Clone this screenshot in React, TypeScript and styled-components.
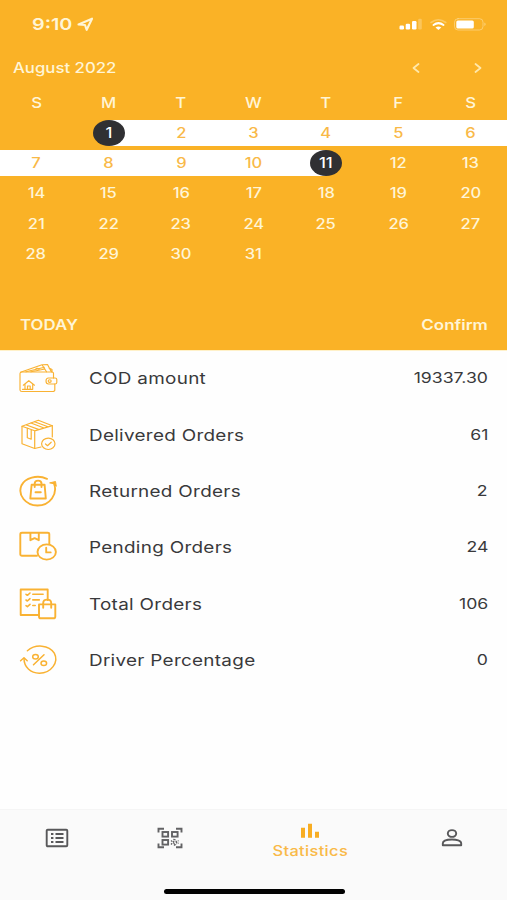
import React from "react";
import styled, { createGlobalStyle } from "styled-components";

const ORANGE = "#fab226";
const CREAM = "#fff5d6";
const INK = "#39393b";
const ICON = "#f9b233";

const GlobalStyle = createGlobalStyle`
  * { box-sizing: border-box; }
  body { margin: 0; background: #fff; font-family: Inter, "Liberation Sans", sans-serif; }
`;

const Screen = styled.div`
  width: 507px;
  height: 900px;
  display: flex;
  flex-direction: column;
  overflow: hidden;
  background: #fefefe;
`;

/* Wide lettering: glyphs are stretched horizontally from the anchored side. */
const Wide = styled.span<{
  $size: number;
  $stretch?: number;
  $weight?: number;
  $color?: string;
  $from?: "left" | "center" | "right";
  $track?: number;
}>`
  display: inline-block;
  white-space: nowrap;
  font-size: ${(p) => p.$size}px;
  line-height: 20px;
  font-weight: ${(p) => p.$weight ?? 400};
  color: ${(p) => p.$color ?? CREAM};
  letter-spacing: ${(p) => p.$track ?? 0}px;
  transform: scaleX(${(p) => p.$stretch ?? 1.22});
  transform-origin: ${(p) => p.$from ?? "center"} center;
`;

const Header = styled.header`
  height: 351px;
  flex: none;
  display: flex;
  flex-direction: column;
  background: ${ORANGE};
  border-bottom: 1px solid #fff1c9;
`;

const StatusBar = styled.div`
  height: 49px;
  padding: 0 20px 1px 32px;
  display: flex;
  align-items: center;
  justify-content: space-between;
`;

const Clock = styled.div`
  display: flex;
  align-items: center;
  gap: 11px;
`;

const MonthBar = styled.div`
  height: 37px;
  padding: 1px 24px 0 13px;
  display: flex;
  align-items: center;
  justify-content: space-between;
`;

const Arrows = styled.div`
  display: flex;
  gap: 52px;
`;

const Week = styled.div<{ $h: number }>`
  height: ${(p) => p.$h}px;
  display: grid;
  grid-template-columns: repeat(7, 1fr);
  align-items: center;
`;

const WeekNames = styled(Week)`
  padding-top: 2px;
`;

const Weeks = styled.div`
  flex: 1;
`;

const Day = styled.div<{ $fill?: "full" | "start" | "end" }>`
  height: 26px;
  display: flex;
  align-items: center;
  justify-content: center;
  background: ${(p) =>
    p.$fill === "full"
      ? "#fff"
      : p.$fill === "start"
      ? "linear-gradient(90deg, transparent 50%, #fff 50%)"
      : p.$fill === "end"
      ? "linear-gradient(90deg, #fff 50%, transparent 50%)"
      : "none"};
`;

const Pill = styled.div`
  width: 32px;
  height: 26px;
  border-radius: 50%;
  background: #303033;
  display: flex;
  align-items: center;
  justify-content: center;
`;

const Actions = styled.div`
  height: 52px;
  padding: 1px 19px 0 20px;
  display: flex;
  align-items: center;
  justify-content: space-between;
`;

const List = styled.main`
  flex: 1;
  display: flex;
  flex-direction: column;
  margin-top: -1px;
`;

const Row = styled.div`
  height: 56.4px;
  padding: 0 19px 0 18px;
  display: flex;
  align-items: center;
`;

const RowLabel = styled.div`
  flex: 1;
  padding-left: 28.5px;
  display: flex;
`;

const Glyph = styled.svg`
  flex: none;
  display: block;
  fill: none;
  stroke-linecap: round;
  stroke-linejoin: round;
`;

const TabBar = styled.nav`
  height: 91px;
  flex: none;
  display: flex;
  flex-direction: column;
  background: #fafafa;
  border-top: 1px solid #f5f5f5;
`;

const Tabs = styled.div`
  height: 55px;
  display: grid;
  grid-template-columns: 113px 113px 168px 115px;
`;

const Tab = styled.div`
  display: flex;
  flex-direction: column;
  align-items: center;
  justify-content: center;
`;

const ActiveTab = styled(Tab)`
  justify-content: flex-start;
  padding-top: 12px;
  gap: 1px;
`;

const HomeBar = styled.div`
  width: 181px;
  height: 5px;
  margin: 23.500px 0 0 164px;
  border-radius: 3px;
  background: #000;
`;

const icons: Record<string, React.ReactNode> = {
  wallet: (
    <g strokeWidth="1.15">
      <path d="M35.5 18V13.2Q35.5 12 34 12H4Q2 12 2 13.5V30Q2 31.5 4 31.5H34.5Q36.8 31.5 36.8 30V24" />
      <path d="M2.5 12.3 24 4.8l4.500 7M8 11.8l18.500-4.500M13 11.8 27 9M24.500 4.800l5-.3 3.800 7.200M34 12V9.500L31 8M18 8.500q2-.6 3 .6" />
      <path d="M37 18h-6.500Q28 18 28 21t2.500 3H37q1.800 0 1.800-1.500v-3Q38.800 18 37 18Z" />
      <ellipse cx="31.700" cy="21" rx="1.500" ry="1.300" />
      <path d="M5.300 25.200 10.800 20.700 16.500 25.200M7 24v5.300h7.700V24M9.500 29v-3h2.700v3M4.500 29.300h2" />
    </g>
  ),
  box: (
    <g strokeWidth="1.200">
      <path d="M23 30 16.700 31.500 4 26.700V9.300L20.300 3.200 34.300 8.700V20" />
      <path d="m4 9.300 12.700 4.500 17.600-5.100M16.700 13.800v17.700M8.500 8l12.600 4.600M13 6l13 5M16.500 4.700 30 9.700M9.300 11.200v9.500l3.900 1.500V12.700" />
      <ellipse cx="30.300" cy="26.800" rx="6.700" ry="5.700" fill="#fefefe" />
      <path d="m27.500 27 2 1.700 3.700-3.500" />
    </g>
  ),
  returned: (
    <g strokeWidth="1.900">
      <path d="M29 5.800C19 1.300 7 5 3.400 12.500-.5 22 7.500 32.300 19.500 32.500 32 32.500 40 21 36 10.500" />
      <path fill={ICON} strokeWidth="1" d="m32 9.800 5.500-1.300.8 4.800-2.300-2.300Z" />
      <path d="M13.600 11.800h13L27.800 25.500H12.300ZM16.700 14V10.500q0-2.900 3.400-2.900t3.400 2.900V14M17.500 19.300h5.300" />
    </g>
  ),
  pending: (
    <g strokeWidth="1.900">
      <path d="M19 26.700H4q-1.700 0-1.700-1.500V5.200q0-1.500 1.700-1.500h25.700q1.600 0 1.600 1.500v10M12.400 4v7.200l4.200-2.100 4.200 2.100V4" />
      <ellipse cx="28.700" cy="23" rx="9.200" ry="7.600" />
      <path d="M28.200 18.700v4.700h4.500" />
    </g>
  ),
  total: (
    <g strokeWidth="1.900">
      <path d="M20.700 29h-18V3.500h27V14" />
      <path d="M21 18.400h16.300v12q0 1.900-2 1.900H23q-2 0-2-1.900ZM25.200 21.700V17q0-3.400 4-3.400t4 3.400v4.700" />
      <g strokeWidth="1.600">
        <path d="m8 8.300 1.400 1L12 7M8 14l1.400 1 2.600-2.300M8 19.700l1.400 1 2.600-2.300M14.800 8.300h10.300M14.800 13.900h6.500M14.800 19.500h2.400" />
      </g>
    </g>
  ),
  percent: (
    <g strokeWidth="1.500">
      <path d="M9.400 8.700C17.500 1.800 31 2.700 36.300 11.200 41.200 20.500 33 31.100 21.500 31.200 12.500 31.300 6 25 6 16.500" />
      <path d="m2.600 18.700 3.400-2.900 3.200 2.900M15.500 22.800 26 12.700" />
      <ellipse cx="17.500" cy="14.700" rx="2.800" ry="2.300" />
      <ellipse cx="25.800" cy="21.200" rx="2.800" ry="2.300" />
    </g>
  ),
};

const rows = [
  { icon: "wallet", label: "COD amount", value: "19337.30" },
  { icon: "box", label: "Delivered Orders", value: "61" },
  { icon: "returned", label: "Returned Orders", value: "2" },
  { icon: "pending", label: "Pending Orders", value: "24" },
  { icon: "total", label: "Total Orders", value: "106" },
  { icon: "percent", label: "Driver Percentage", value: "0" },
];

const weekStarts = [0, 7, 14, 21, 28];

function fillOf(day: number) {
  if (day === 1) return "start" as const;
  if (day === 11) return "end" as const;
  return day > 1 && day < 11 ? ("full" as const) : undefined;
}

function DayCell({ day }: { day: number }) {
  if (day < 1 || day > 31) return <Day />;
  const fill = fillOf(day);
  const selected = day === 1 || day === 11;
  const text = (
    <Wide $size={14} $weight={500} $stretch={1.180} $color={fill === "full" ? "#f9b947" : selected ? "#fff" : CREAM}>
      {day}
    </Wide>
  );
  return <Day $fill={fill}>{selected ? <Pill>{text}</Pill> : text}</Day>;
}

export default function App() {
  return (
    <>
      <GlobalStyle />
      <Screen>
        <Header>
          <StatusBar>
            <Clock>
              <Wide $size={16.500} $weight={600} $from="left" $stretch={1.2}>9:10</Wide>
              <Glyph width="17" height="15" viewBox="0 0 17 15" stroke={CREAM} strokeWidth="2.100">
                <path d="M1.500 7.500 15 1.700 9.700 12.800 8 8Z" />
              </Glyph>
            </Clock>
            <Glyph width="88" height="16" viewBox="0 0 88 16">
              <g fill={CREAM}>
                <rect x="0.500" y="9.500" width="4.500" height="4" rx="1.200" fill="#fff" />
                <rect x="6.700" y="7.800" width="4.400" height="5.700" rx="1.200" fill="#fff" />
                <rect x="13" y="5" width="4.500" height="8.500" rx="1.200" fill="#fff" />
                <rect x="19.200" y="2.800" width="3.600" height="10.700" rx="1.200" opacity="0.3" />
              </g>
              <path d="M32 6.500q7.400-5.500 14.800 0" stroke={CREAM} strokeWidth="1.600" opacity="0.350" />
              <path d="M34.500 9q5-3.800 10 0" stroke="#fff" strokeWidth="2" />
              <path d="M36.500 11.500q2.900-2 5.800 0l-2.900 2.500Z" fill="#fff" />
              <rect x="55.500" y="2.700" width="28.500" height="11.300" rx="3.500" stroke={CREAM} opacity="0.4" />
              <rect x="57.300" y="4.500" width="17.500" height="8" rx="1.500" fill="#fff" />
              <path d="M85.500 6.500q2 1.700 0 3.600Z" fill={CREAM} opacity="0.6" />
            </Glyph>
          </StatusBar>
          <MonthBar>
            <Wide $size={14.500} $weight={500} $from="left" $stretch={1.155}>August 2022</Wide>
            <Arrows>
              <Glyph width="10" height="12" viewBox="0 0 10 12" stroke="#ffe8ab" strokeWidth="1.800">
                <path d="M7.500 2 2.500 6 7.500 10" />
              </Glyph>
              <Glyph width="10" height="12" viewBox="0 0 10 12" stroke="#ffe8ab" strokeWidth="1.800">
                <path d="m2.500 2 5 4-5 4" />
              </Glyph>
            </Arrows>
          </MonthBar>
          <WeekNames $h={32}>
            {["S", "M", "T", "W", "T", "F", "S"].map((d, i) => (
              <Day key={i}>
                <Wide $size={14.500} $weight={500} $stretch={1.150}>{d}</Wide>
              </Day>
            ))}
          </WeekNames>
          <Weeks>
            {weekStarts.map((s) => (
              <Week key={s} $h={30.200}>
                {[0, 1, 2, 3, 4, 5, 6].map((i) => (
                  <DayCell key={i} day={s + i} />
                ))}
              </Week>
            ))}
          </Weeks>
          <Actions>
            <Wide $size={14.500} $weight={600} $from="left" $stretch={1.160}>TODAY</Wide>
            <Wide $size={14.500} $weight={600} $from="right" $stretch={1.170}>Confirm</Wide>
          </Actions>
        </Header>
        <List>
          {rows.map((r) => (
            <Row key={r.label}>
              <Glyph width="42" height="36" viewBox="0 0 42 36" stroke={ICON}>
                {icons[r.icon]}
              </Glyph>
              <RowLabel>
                <Wide $size={16} $color={INK} $from="left" $stretch={1.180} $track={0.250}>{r.label}</Wide>
              </RowLabel>
              <Wide $size={14} $color={INK} $from="right" $stretch={1.260}>{r.value}</Wide>
            </Row>
          ))}
        </List>
        <TabBar>
          <Tabs>
            <Tab>
              <Glyph width="24" height="20" viewBox="0 0 24 20" stroke="#58585a" strokeWidth="1.900">
                <rect x="1.700" y="1.700" width="20.600" height="16.600" rx="1" />
                <path strokeLinecap="butt" d="M6 6h2.400M6 10h2.400M6 14h2.400M10.500 6h8M10.500 10h8M10.500 14h8" />
              </Glyph>
            </Tab>
            <Tab>
              <Glyph width="26" height="22" viewBox="0 0 26 22" stroke="#626264" strokeWidth="1.900">
                <path strokeLinejoin="miter" strokeLinecap="butt" d="M1.500 5.500V1.800H7M19 1.800h5.500v3.700M1.500 16.500v3.700H7M19 20.200h5.500v-3.700" />
                <g strokeLinejoin="miter">
                  <rect x="5.500" y="5" width="5.600" height="4.600" />
                  <rect x="15" y="5" width="5.600" height="4.600" />
                  <rect x="5.500" y="13" width="5.600" height="4.600" />
                </g>
                <path strokeWidth="1.300" strokeDasharray="1.700 1.300" strokeLinecap="butt" d="m14 13.500 5 4.500M16.500 12l5 4.500M14 17.500l4.500-5M17 18.500l4.500-5" />
              </Glyph>
            </Tab>
            <ActiveTab>
              <Glyph width="20" height="18" viewBox="0 0 20 18">
                <path fill="#f8ad22" d="M1 5.700h4v10H1zM8 1.700h4v14H8zM15 9.700h4v6h-4z" />
              </Glyph>
              <Wide $size={14} $weight={500} $color="#f9b947" $track={0.300} $stretch={1.170}>Statistics</Wide>
            </ActiveTab>
            <Tab>
              <Glyph width="24" height="20" viewBox="0 0 24 20" stroke="#58585a" strokeWidth="1.900">
                <ellipse cx="12" cy="5.500" rx="4.200" ry="3.400" />
                <path d="M2.800 17.300v-1.900c0-5.200 18.400-5.200 18.400 0v1.900Z" />
              </Glyph>
            </Tab>
          </Tabs>
          <HomeBar />
        </TabBar>
      </Screen>
    </>
  );
}
